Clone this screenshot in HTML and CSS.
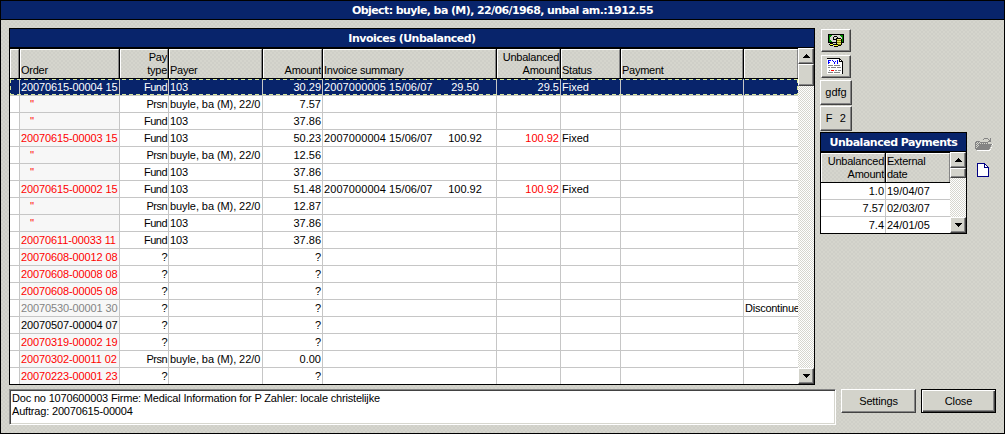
FILE: index.html
```html
<!DOCTYPE html>
<html lang="en">
<head>
<meta charset="utf-8">
<title>Invoices</title>
<link rel="stylesheet" href="styles.css">
</head>
<body>
<div class="window">
  <div class="window-title"><span>Object: buyle, ba (M), 22/06/1968, unbal am.:1912.55</span></div>
  <div class="main">
    <section class="invoices">
      <h1 class="caption"><span>Invoices (Unbalanced)</span></h1>
      <div class="table-area">
        <div class="table">
          <div class="row head"><b></b><b>Order</b><b class="num">Pay<br>type</b><b>Payer</b><b class="num">Amount</b><b>Invoice summary</b><b class="num">Unbalanced<br>Amount</b><b>Status</b><b>Payment</b><b></b></div>
          <div class="row selected"><i></i><i>20070615-00004 15</i><i>Fund</i><i>103</i><i>30.29</i><i><span class="doc">2007000005 15/06/07</span><span class="sum">29.50</span></i><i>29.5</i><i>Fixed</i><i></i><i></i></div>
          <div class="row"><i></i><i class="ditto">''</i><i>Prsn</i><i>buyle, ba (M), 22/0</i><i>7.57</i><i></i><i></i><i></i><i></i><i></i></div>
          <div class="row"><i></i><i class="ditto">''</i><i>Fund</i><i>103</i><i>37.86</i><i></i><i></i><i></i><i></i><i></i></div>
          <div class="row"><i></i><i class="red">20070615-00003 15</i><i>Fund</i><i>103</i><i>50.23</i><i><span class="doc">2007000004 15/06/07</span><span class="sum">100.92</span></i><i class="red">100.92</i><i>Fixed</i><i></i><i></i></div>
          <div class="row"><i></i><i class="ditto">''</i><i>Prsn</i><i>buyle, ba (M), 22/0</i><i>12.56</i><i></i><i></i><i></i><i></i><i></i></div>
          <div class="row"><i></i><i class="ditto">''</i><i>Fund</i><i>103</i><i>37.86</i><i></i><i></i><i></i><i></i><i></i></div>
          <div class="row"><i></i><i class="red">20070615-00002 15</i><i>Fund</i><i>103</i><i>51.48</i><i><span class="doc">2007000004 15/06/07</span><span class="sum">100.92</span></i><i class="red">100.92</i><i>Fixed</i><i></i><i></i></div>
          <div class="row"><i></i><i class="ditto">''</i><i>Prsn</i><i>buyle, ba (M), 22/0</i><i>12.87</i><i></i><i></i><i></i><i></i><i></i></div>
          <div class="row"><i></i><i class="ditto">''</i><i>Fund</i><i>103</i><i>37.86</i><i></i><i></i><i></i><i></i><i></i></div>
          <div class="row"><i></i><i class="red">20070611-00033 11</i><i>Fund</i><i>103</i><i>37.86</i><i></i><i></i><i></i><i></i><i></i></div>
          <div class="row"><i></i><i class="red">20070608-00012 08</i><i>?</i><i></i><i>?</i><i></i><i></i><i></i><i></i><i></i></div>
          <div class="row"><i></i><i class="red">20070608-00008 08</i><i>?</i><i></i><i>?</i><i></i><i></i><i></i><i></i><i></i></div>
          <div class="row"><i></i><i class="red">20070608-00005 08</i><i>?</i><i></i><i>?</i><i></i><i></i><i></i><i></i><i></i></div>
          <div class="row"><i></i><i class="gray">20070530-00001 30</i><i>?</i><i></i><i>?</i><i></i><i></i><i></i><i></i><i>Discontinue</i></div>
          <div class="row"><i></i><i>20070507-00004 07</i><i>?</i><i></i><i>?</i><i></i><i></i><i></i><i></i><i></i></div>
          <div class="row"><i></i><i class="red">20070319-00002 19</i><i>?</i><i></i><i>?</i><i></i><i></i><i></i><i></i><i></i></div>
          <div class="row"><i></i><i class="red">20070302-00011 02</i><i>Prsn</i><i>buyle, ba (M), 22/0</i><i>0.00</i><i></i><i></i><i></i><i></i><i></i></div>
          <div class="row"><i></i><i class="red">20070223-00001 23</i><i>?</i><i></i><i>?</i><i></i><i></i><i></i><i></i><i></i></div>
        </div>
        <div class="scrollbar">
          <div class="arrow"><svg width="7" height="4" shape-rendering="crispEdges"><path d="M3 0h1v1h1v1h1v1h1v1H0V3h1V2h1V1h1z"/></svg></div>
          <div class="thumb"></div>
          <div class="arrow down"><svg width="7" height="4" shape-rendering="crispEdges"><path d="M0 0h7v1H6v1H5v1H4v1H3V3H2V2H1V1H0z"/></svg></div>
        </div>
      </div>
    </section>
    <aside class="side">
      <div class="tools">
        <button class="tool icon-tool" aria-label="Payment">
          <svg width="16" height="13" shape-rendering="crispEdges">
            <path d="M0 0h16v9H0z"/><path fill="#008c00" d="M1 1h14v7H1z"/>
            <path fill="#d6d6ce" d="M4 1h8v1h1v1h1v3h-1v1H9v1H4V7H3V6H2V3h1V2h1z"/>
            <path d="M6 2h3v1H6zM5 3h1v3H5zM9 3h1v1H9zM6 5h2v1H6zM8 4h1v1H8zM9 4h4v1H9zM8 5h1v6H8zM13 5h1v6h-1zM9 11h4v1H9z"/>
            <path fill="#e7e76b" d="M9 5h4v1H9zM9 7h4v1H9zM9 9h4v1H9z"/>
            <path fill="#8c8c00" d="M9 6h4v1H9zM9 8h4v1H9zM9 10h4v1H9z"/>
            <path d="M2 9h3v1H2zM1 10h1v1H1zM5 10h1v1H5zM2 11h3v1H2zM6 10h4v1H6zM10 11h1v1h-1zM6 12h4v1H6z"/>
            <path fill="#ff3" d="M2 10h3v1H2zM6 11h4v1H6z"/>
          </svg>
        </button>
        <button class="tool icon-tool" aria-label="Information">
          <svg width="17" height="17" shape-rendering="crispEdges">
            <path fill="#fff" d="M0 1h13l3 3v12H0z"/>
            <path fill="#000" d="M0 0h13v1h1v1h1v1h1v13h-1V4h-3V1H0z"/><path fill="#fff" d="M13 2h1v1h-1z"/>
            <path fill="#00f" d="M1 2h3v1H2v1h1v1H2v1H1zM5 2h1v1h1v1h1V3h1V2h0v2H8v2H7V4H6V3H5zM10 2h1v4h-1z"/>
            <path fill="#848484" d="M1 7h5v1H1zM7 7h6v1H7zM1 9h2v1H1zM4 9h5v1H4zM10 9h4v1h-4zM2 12h1v1H2zM8 12h2v1H8zM11 12h3v1h-3zM1 14h5v1H1zM7 14h6v1H7z"/>
            <path fill="red" d="M4 12h3v1H4z"/>
          </svg>
        </button>
        <button class="tool text-tool">gdfg</button>
        <button class="tool text-tool f2">F&nbsp; 2</button>
      </div>
      <div class="payments-line">
        <section class="payments">
          <h2 class="caption"><span>Unbalanced Payments</span></h2>
          <div class="table-area">
            <div class="table">
              <div class="row head"><b class="num">Unbalanced<br>Amount</b><b>External<br>date</b></div>
              <div class="row"><i>1.0</i><i>19/04/07</i></div>
              <div class="row"><i>7.57</i><i>02/03/07</i></div>
              <div class="row"><i>7.4</i><i>24/01/05</i></div>
            </div>
            <div class="scrollbar">
              <div class="arrow"><svg width="7" height="4" shape-rendering="crispEdges"><path d="M3 0h1v1h1v1h1v1h1v1H0V3h1V2h1V1h1z"/></svg></div>
              <div class="thumb"></div>
              <div class="arrow down"><svg width="7" height="4" shape-rendering="crispEdges"><path d="M0 0h7v1H6v1H5v1H4v1H3V3H2V2H1V1H0z"/></svg></div>
            </div>
          </div>
        </section>
        <div class="file-icons">
          <svg width="18" height="14" shape-rendering="crispEdges">
            <path fill="#fff" d="M2 13h13v-1h1v-2h1V8h1V7h-1v4h-1v2h-1v1H2zM14 4h2v1h-2z"/>
            <path fill="#848484" d="M1 4h4v1h8v2h4v1h-1v2h-1v2h-1v1H1V12H0V5h1zM9 1h4v1h1v1h1V1h1v4h-3V4h1V3h-1V2H9v1H8V2h1z"/>
            <path fill="#d6d6ce" d="M2 5h1v1H2zM4 5h1v1H4zM1 6h1v1H1zM3 6h1v1H3zM5 6h1v1H5zM7 6h1v1H7zM9 6h1v1H9zM11 6h1v1h-1zM2 7h1v1H2zM1 8h1v1H1zM3 8h1v1H3zM2 9h1v1H2zM1 10h1v1H1z"/>
          </svg>
          <svg width="12" height="14" shape-rendering="crispEdges">
            <path fill="#000084" d="M0 0h8v1h1v1h1v1h1v1h1v10H0z"/>
            <path fill="#fff" d="M1 1h6v4h4v8H1zM8 2h1v1h1v1H8z"/>
          </svg>
        </div>
      </div>
    </aside>
  </div>
  <footer class="footer">
    <div class="memo"><p class="memo-doc">Doc no 1070600003 Firme: Medical Information for P Zahler: locale christelijke</p><p>Auftrag: 20070615-00004</p></div>
    <button class="push">Settings</button>
    <button class="push default">Close</button>
  </footer>
</div>
</body>
</html>
```
FILE: styles.css
```css
* { box-sizing: border-box; }

body {
  margin: 0;
  font: 11px/13px "Liberation Sans", Arial, sans-serif;
  color: #000;
}

.window {
  display: flex;
  flex-direction: column;
  width: 1005px;
  height: 434px;
  border: 1px solid #000;
  overflow: hidden;
  background: repeating-conic-gradient(#cfcfc8 0 25%, #d5d5cd 0 50%) 0 0 / 4px 4px;
}

.window-title, .caption {
  margin: 0;
  height: 19px;
  background: #08246b;
  color: #fff;
  font: bold 11px/19px "DejaVu Sans", Verdana, sans-serif;
  letter-spacing: -0.5px;
  text-align: center;
  white-space: nowrap;
  border-bottom: 1px solid #000;
}
.window-title { letter-spacing: -0.6px; }

.main { display: flex; gap: 5px; padding: 8px 8px 0; height: 365px; }

.invoices {
  width: 806px;
  height: 357px;
  border: 1px solid #000;
  background: #fff;
}
.table-area { display: flex; }
.table { flex: 1; min-width: 0; overflow: hidden; }
.row {
  display: grid;
  grid-template-columns: 10px 100px 49px 94px 60px 174px 64px 60px 123px 54px;
  height: 17px;
}
.row i, .row b { font-style: normal; font-weight: normal; white-space: nowrap; overflow: hidden; }
.row i {
  height: 17px;
  padding: 0 1px;
  line-height: 16px;
  border-right: 1px solid #c6c6c6;
  border-bottom: 1px solid #c6c6c6;
}
.row i:last-child { border-right: 0; }
.row:last-child i { border-bottom: 0; height: 16px; }
.invoices .row i:nth-child(2) { background: #f7f7f7; letter-spacing: -0.12px; }
.invoices .row i:nth-child(3) { letter-spacing: -0.5px; }
.invoices .row i:nth-child(4) { letter-spacing: -0.08px; }
.invoices .row i:nth-child(10) { letter-spacing: -0.25px; }
.invoices .row i:nth-child(3),
.invoices .row i:nth-child(5),
.invoices .row i:nth-child(7),
.payments .row i:first-child { text-align: right; }
.row .red { color: red; }
.row .gray { color: #848484; }
.row .ditto { color: red; padding-left: 10px; }
.doc { display: inline-block; width: 110px; letter-spacing: 0.08px; }
.sum { display: inline-block; width: 62px; text-align: center; }

.row.head {
  height: 31px;
  background: #000;
  padding: 1px 0;
}
.head b {
  display: flex;
  align-items: flex-end;
  padding: 0 1px 1px 0;
  margin-right: 1px;
  height: 29px;
  letter-spacing: -0.25px;
  background: repeating-conic-gradient(#cfcfc8 0 25%, #d5d5cd 0 50%) 0 0 / 4px 4px;
  border-top: 1px solid #fff;
  border-left: 1px solid #fff;
  border-right: 1px solid #848484;
}
.head b:last-child { margin-right: 0; }
.head .num { justify-content: flex-end; text-align: right; padding-right: 0; }

.row.selected {
  position: relative;
  color: #fff;
}
.invoices .row.selected i { background: #08246b; }
.row.selected::after {
  content: "";
  position: absolute;
  inset: 0 0 1px;
  background:
    repeating-linear-gradient(90deg, #d6e79c 0 4px, transparent 4px 7px) 0 0 / 100% 1px no-repeat,
    repeating-linear-gradient(90deg, #d6e79c 0 4px, transparent 4px 7px) 0 100% / 100% 1px no-repeat,
    repeating-linear-gradient(#d6e79c 0 4px, transparent 4px 7px) 0 0 / 1px 100% no-repeat,
    repeating-linear-gradient(#d6e79c 0 4px, transparent 4px 7px) 100% 0 / 1px 100% no-repeat;
}

.scrollbar {
  display: flex;
  flex-direction: column;
  width: 16px;
  height: 336px;
  background: repeating-conic-gradient(#fff 0 25%, #d6d6ce 0 50%) 0 0 / 2px 2px;
}
.arrow, .thumb, .tool, .push {
  background: #d3d3cb;
  border: 1px solid;
  border-color: #fff #424242 #424242 #fff;
  box-shadow: inset -1px -1px #848484;
}
.arrow { display: flex; align-items: center; justify-content: center; height: 16px; flex: none; }
.thumb { height: 22px; }
.down { margin-top: auto; }

.side { width: 180px; }
.tools { display: flex; flex-direction: column; padding-top: 1px; }
.tool {
  display: flex;
  align-items: center;
  justify-content: center;
  padding: 0;
  font: inherit;
}
.icon-tool { width: 30px; height: 23px; margin: 0 0 3px 1px; }
.icon-tool svg { margin-right: 1px; }
.text-tool { width: 32px; height: 25px; margin-bottom: 1px; }
.f2 { letter-spacing: 0.35px; }
.icon-tool + .text-tool { margin-top: -1px; }

.payments-line { display: flex; gap: 8px; }
.payments { width: 147px; height: 102px; border: 1px solid #000; background: #fff; }
.payments .row { grid-template-columns: 65px 64px; }
.payments .scrollbar { height: 81px; }
.payments .thumb { height: 10px; }
.file-icons { display: flex; flex-direction: column; gap: 12px; padding-top: 5px; }
.file-icons svg { display: block; }
.file-icons svg + svg { margin-left: 2px; }

.footer { display: flex; gap: 5px; padding: 4px 0 0 8px; }
.memo {
  flex: none;
  width: 827px;
  height: 36px;
  padding: 2px 1px;
  background: #fff;
  border: 1px solid;
  border-color: #848484 #fff #fff #848484;
  box-shadow: inset 1px 1px #424242, inset -1px -1px #d6d6ce;
  letter-spacing: -0.18px;
}
.memo p { margin: 0; padding-left: 1px; white-space: nowrap; }
.push { flex: none; width: 75px; height: 24px; padding: 0; font: inherit; letter-spacing: -0.15px; }
.push.default {
  border-color: #000;
  box-shadow: inset 1px 1px #fff, inset -1px -1px #424242, inset -2px -2px #848484;
}
```
